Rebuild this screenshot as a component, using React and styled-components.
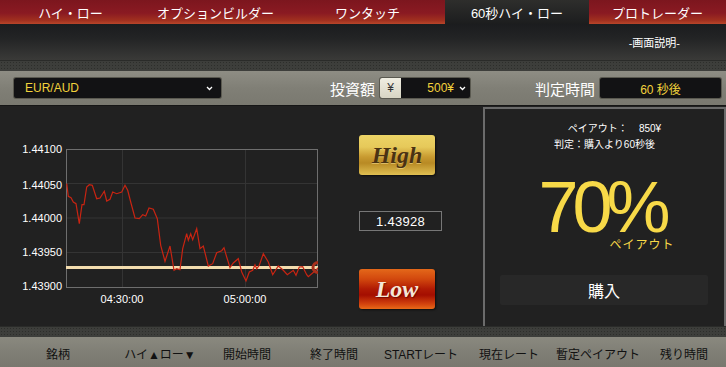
import styled, { createGlobalStyle } from "styled-components";

const GlobalStyle = createGlobalStyle`
  body {
    margin: 0;
    background: #212121;
    font-family: "Liberation Sans", "Noto Sans CJK JP", sans-serif;
  }
`;

const TABS = ["ハイ・ロー", "オプションビルダー", "ワンタッチ", "60秒ハイ・ロー", "プロトレーダー"];

const COLUMNS = ["銘柄", "ハイ▲ロー▼", "開始時間", "終了時間", "STARTレート", "現在レート", "暫定ペイアウト", "残り時間"];

// price line, page coordinates
const PRICES = [
  [66.7, 181.7], [68.3, 194.3], [71, 195.7], [73.3, 200], [76, 201.7], [79.3, 221.7],
  [82, 202.7], [84, 202.7], [86.7, 185], [89.3, 182.7], [92.3, 183.3], [96.7, 196.7],
  [100, 196], [104.3, 189.3], [106.7, 199], [110, 197.3], [112.7, 190], [116.7, 191.7],
  [121.7, 190], [125, 183.3], [127.7, 188.3], [130.7, 200], [135, 216], [139.3, 216.7],
  [142.7, 212.7], [145.7, 214], [149, 206], [153.3, 207.3], [157.3, 216.7], [160.7, 243.3],
  [165, 259.3], [170, 244], [174, 268.3], [176.7, 266.7], [180, 267.7], [182.7, 246.7],
  [186.7, 231.7], [188.3, 238.3], [190.7, 231.7], [192.7, 237.7], [196.7, 226.7],
  [200, 246.7], [203.3, 244], [208.3, 264], [212.7, 261.7], [216.7, 250.7], [221.7, 248.7],
  [224, 245.7], [226.7, 255], [230, 265.7], [233.3, 261], [238.3, 256.7], [241.7, 270],
  [246, 279], [249.3, 270], [252.7, 268.3], [255, 262.7], [256.7, 266.7], [259.3, 263.3],
  [263.3, 251.7], [268.3, 260], [272.7, 272.7], [278.3, 264], [283.3, 268.3], [287.3, 272.7],
  [293.3, 268.3], [296, 273.3], [299.3, 265], [302.7, 264.7], [306.7, 272.7], [308.3, 274.7],
  [315, 269], [318.3, 265.7],
];

const Y_LABELS = [
  ["1.44100", 43],
  ["1.44050", 79],
  ["1.44000", 112],
  ["1.43950", 146],
  ["1.43900", 180],
];

const Tabs = styled.div`
  display: grid;
  grid-template-columns: 141px 149px 155px 144px 1fr;
  height: 24px;
`;

const Tab = styled.div`
  display: flex;
  align-items: center;
  justify-content: center;
  color: #fff;
  font-size: 13px;
  background: ${(p) =>
    p.$active
      ? "linear-gradient(#2e2e2c, #1c1d1e)"
      : "linear-gradient(#7c161e 0%, #8a1a22 55%, #a1301f 85%, #b8452a 100%)"};
`;

const InfoBar = styled.div`
  height: 36px;
  display: flex;
  align-items: center;
  justify-content: flex-end;
  padding-right: 46px;
  color: #fff;
  font-size: 11px;
  background: linear-gradient(#1b1c1e, #232425 40%, #3a3a38);
`;

const Texture = styled.div`
  height: 10px;
  background-color: #3d3e3b;
  background-image: radial-gradient(#2d2e2b 0.8px, transparent 1px);
  background-size: 3px 3px;
  border-top: 1px solid #2a2b29;
`;

const ControlBar = styled.div`
  height: 34px;
  display: flex;
  align-items: center;
  padding-left: 14px;
  background: linear-gradient(#8e8d84, #807f76 50%, #7a7970);
`;

const DarkBox = styled.div`
  height: 20px;
  box-sizing: border-box;
  display: flex;
  align-items: center;
  background: #121214;
  border-radius: 2px;
  box-shadow: 0 0 0 1px #5a5950;
  color: #f2d23c;
  font-size: 12px;
`;

const Select = styled(DarkBox)`
  width: 207px;
  padding: 0 8px 0 11px;
  justify-content: space-between;
`;

const Label = styled.span`
  color: #fff;
  font-size: 15px;
  margin-left: ${(p) => p.$gap}px;
  margin-right: 5px;
`;

const AmountBox = styled(DarkBox)`
  width: 90px;
  overflow: hidden;
`;

const Yen = styled.span`
  width: 21px;
  height: 100%;
  display: flex;
  align-items: center;
  justify-content: center;
  color: #333;
  font-size: 12px;
  background: linear-gradient(#f0eee2, #d8d5c4);
`;

const Amount = styled.span`
  flex: 1;
  display: flex;
  align-items: center;
  justify-content: flex-end;
  gap: 5px;
  padding-right: 4px;
`;

const TimeBox = styled(DarkBox)`
  width: 121px;
  justify-content: center;
`;

const Main = styled.div`
  height: 221px;
  display: flex;
  background: #212121;
  border-top: 1px solid #161616;
  box-sizing: border-box;
`;

const ChartArea = styled.div`
  width: 340px;
  flex: none;
`;

const TradeColumn = styled.div`
  width: 143px;
  flex: none;
  display: flex;
  flex-direction: column;
  padding: 29px 0 0 19px;
  box-sizing: border-box;
`;

const BetButton = styled.div`
  width: 76px;
  height: 40px;
  border-radius: 3px;
  display: flex;
  align-items: center;
  justify-content: center;
  font-family: "Liberation Serif", "DejaVu Serif", serif;
  font-style: italic;
  font-weight: bold;
  font-size: 24px;
  box-shadow: 1px 1px 2px rgba(0, 0, 0, 0.6);
  color: ${(p) => (p.$low ? "#f4e8d8" : "#4a3212")};
  text-shadow: ${(p) =>
    p.$low ? "1px 1px 1px rgba(80,0,0,0.6)" : "0 1px 0 rgba(255,235,160,0.5)"};
  background: ${(p) =>
    p.$low
      ? "linear-gradient(#e4681a 0%, #d2480e 25%, #b01a04 50%, #a40e00 65%, #d4440e 88%, #e86a18 100%)"
      : "linear-gradient(#ecd466 0%, #e6c95a 30%, #c89a30 55%, #b88a24 70%, #e0c052 100%)"};
`;

const RateBox = styled.div`
  width: 83px;
  height: 20px;
  box-sizing: border-box;
  margin: 36px 0 38px;
  border: 1px solid #777;
  display: flex;
  align-items: center;
  justify-content: center;
  color: #fff;
  font-size: 13px;
  letter-spacing: 0.3px;
`;

const PayoutPanel = styled.div`
  flex: 1;
  margin-top: 1px;
  border: 2px solid #6b6b6b;
  border-bottom: none;
  display: flex;
  flex-direction: column;
  align-items: center;
  padding-top: 12px;
  color: #fff;
`;

const InfoLine = styled.div`
  font-size: 10px;
  line-height: 16px;
  padding-left: ${(p) => p.$shift || 0}px;
  white-space: pre;
`;

const BigWrap = styled.div`
  display: flex;
  flex-direction: column;
  align-items: flex-end;
  margin-top: 22px;
`;

const BigRate = styled.div`
  font-size: 72px;
  line-height: 64px;
  letter-spacing: -6px;
  color: #f7d948;
  padding-right: 6px;
`;

const BigSub = styled.div`
  font-size: 12px;
  line-height: 12px;
  color: #f7d948;
  margin-right: -4px;
  letter-spacing: 1px;
`;

const BuyButton = styled.div`
  align-self: stretch;
  margin: 24px 16px 0 15px;
  height: 30px;
  display: flex;
  align-items: center;
  justify-content: center;
  background: #282828;
  border-radius: 2px;
  font-size: 16px;
  color: #fff;
`;

const Footer = styled.div`
  height: 32px;
  display: grid;
  grid-template-columns: 116px 88px 86px 88px 86px 90px 88px 84px;
  align-items: center;
  background: linear-gradient(#8a897f, #7f7e75 50%, #77766d);
`;

const Column = styled.span`
  text-align: center;
  font-size: 12px;
  color: #111;
`;

function Chevron() {
  return (
    <svg width="7" height="5" viewBox="0 0 7 5">
      <polyline points="1,1 3.5,3.5 6,1" fill="none" stroke="#fff" strokeWidth="1.3" />
    </svg>
  );
}

function PriceChart() {
  const line = PRICES.map(([x, y]) => `${x},${y - 104}`).join(" ");
  return (
    <svg width="340" height="220" viewBox="0 0 340 220">
      <defs>
        <clipPath id="plot">
          <rect x="66" y="43" width="252" height="138" />
        </clipPath>
      </defs>
      <g stroke="#343434" strokeWidth="1">
        <line x1="122.5" y1="43" x2="122.5" y2="181" />
        <line x1="245.5" y1="43" x2="245.5" y2="181" />
        <line x1="66" y1="77.5" x2="318" y2="77.5" />
        <line x1="66" y1="112" x2="318" y2="112" />
        <line x1="66" y1="146.5" x2="318" y2="146.5" />
      </g>
      <rect x="66.5" y="43.5" width="251" height="138" fill="none" stroke="#6e6e6e" />
      <g fill="#fff" fontSize="11" fontFamily="Liberation Sans, sans-serif">
        {Y_LABELS.map(([t, y]) => (
          <text key={t} x="62" y={y + 4} textAnchor="end">
            {t}
          </text>
        ))}
        <text x="122" y="197" textAnchor="middle">04:30:00</text>
        <text x="245" y="197" textAnchor="middle">05:00:00</text>
      </g>
      <g clipPath="url(#plot)">
        <line x1="66" y1="161.5" x2="318" y2="161.5" stroke="#f2dcae" strokeWidth="3" />
        <polyline points={line} fill="none" stroke="#c82412" strokeWidth="1.2" />
        <circle cx="318" cy="161.5" r="5" fill="none" stroke="#a8301c" strokeWidth="3" />
      </g>
    </svg>
  );
}

function App() {
  return (
    <>
      <GlobalStyle />
      <Tabs>
        {TABS.map((t, i) => (
          <Tab key={t} $active={i === 3}>
            {t}
          </Tab>
        ))}
      </Tabs>
      <InfoBar>-画面説明-</InfoBar>
      <Texture />
      <ControlBar>
        <Select>
          <span>EUR/AUD</span>
          <Chevron />
        </Select>
        <Label $gap={109}>投資額</Label>
        <AmountBox>
          <Yen>¥</Yen>
          <Amount>
            500¥
            <Chevron />
          </Amount>
        </AmountBox>
        <Label $gap={65}>判定時間</Label>
        <TimeBox>60 秒後</TimeBox>
      </ControlBar>
      <Main>
        <ChartArea>
          <PriceChart />
        </ChartArea>
        <TradeColumn>
          <BetButton>High</BetButton>
          <RateBox>1.43928</RateBox>
          <BetButton $low>Low</BetButton>
        </TradeColumn>
        <PayoutPanel>
          <InfoLine $shift={20}>{"ペイアウト：    850¥"}</InfoLine>
          <InfoLine>判定：購入より60秒後</InfoLine>
          <BigWrap>
            <BigRate>70%</BigRate>
            <BigSub>ペイアウト</BigSub>
          </BigWrap>
          <BuyButton>購入</BuyButton>
        </PayoutPanel>
      </Main>
      <Texture />
      <Footer>
        {COLUMNS.map((c) => (
          <Column key={c}>{c}</Column>
        ))}
      </Footer>
    </>
  );
}

export default App;
